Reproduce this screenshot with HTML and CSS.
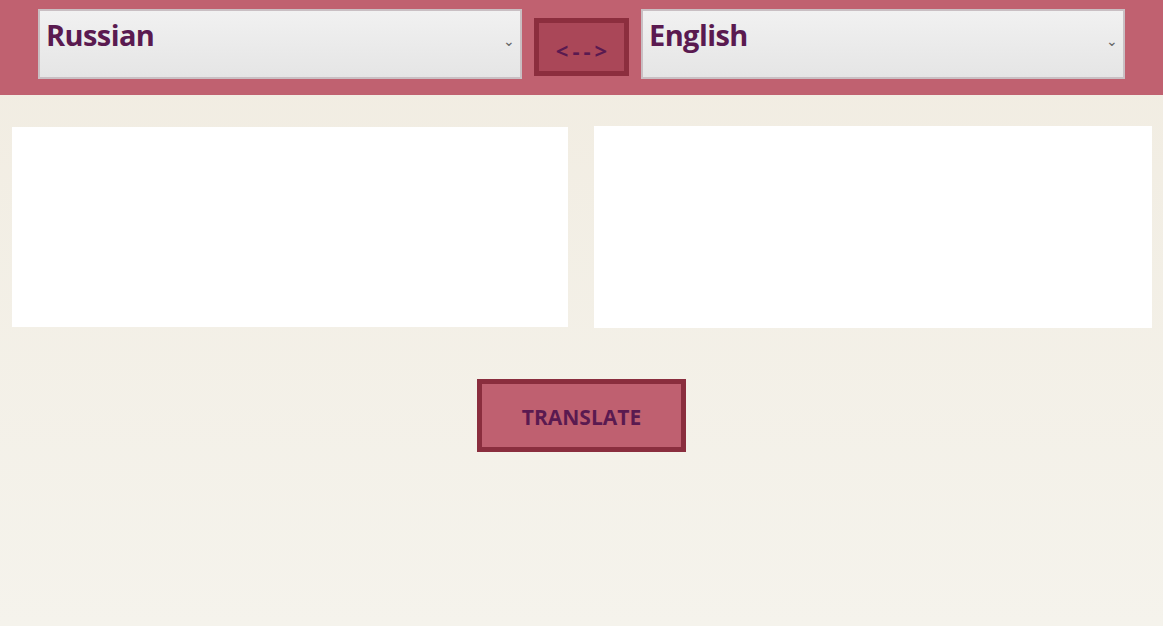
FILE: index.html
```html
<!DOCTYPE html>
<html lang="en">
<head>
<meta charset="utf-8">
<title>Translator</title>
<link rel="stylesheet" href="styles.css">
</head>
<body>
<header class="topbar">
  <div class="lang-select">
    <span class="lang-name">Russian</span>
    <span class="chevron">&#x2304;</span>
  </div>
  <button class="swap" type="button">&lt;--&gt;</button>
  <div class="lang-select">
    <span class="lang-name">English</span>
    <span class="chevron">&#x2304;</span>
  </div>
</header>
<main class="content">
  <div class="panes">
    <textarea class="pane pane-left"></textarea>
    <textarea class="pane pane-right"></textarea>
  </div>
  <div class="actions">
    <button class="translate" type="button">TRANSLATE</button>
  </div>
</main>
</body>
</html>
```
FILE: styles.css
```css
html, body {
  margin: 0;
  padding: 0;
  height: 100%;
}
body {
  font-family: "Open Sans", "Noto Sans", sans-serif;
  background: linear-gradient(to bottom, #f1ece1 0%, #f5f3ec 100%);
}
.topbar {
  height: 95px;
  box-sizing: border-box;
  background: #c06170;
  display: flex;
  justify-content: center;
  align-items: flex-start;
  padding-top: 9px;
  gap: 12px;
}
.lang-select {
  width: 484px;
  height: 70px;
  box-sizing: border-box;
  border: 2px solid #c9bfc3;
  background: linear-gradient(to bottom, #f1f1f1 0%, #e5e5e5 100%);
  display: flex;
  align-items: flex-start;
  justify-content: space-between;
  padding: 4px 5px 0 6px;
}
.lang-name {
  font-size: 29px;
  font-weight: 700;
  color: #5a1a50;
  line-height: 40px;
  letter-spacing: -0.6px;
}
.chevron {
  font-size: 14px;
  color: #666;
  line-height: 14px;
  margin-top: 19px;
}
.swap {
  width: 95px;
  height: 58px;
  margin-top: 9px;
  box-sizing: border-box;
  border: 5px solid #8c2e3e;
  background: #aa4758;
  color: #5a1a50;
  font-family: "Open Sans", "Noto Sans", sans-serif;
  font-weight: 700;
  font-size: 22px;
  letter-spacing: 4px;
  padding: 5px 0 0 4px;
}
.content {
  padding-top: 31px;
}
.panes {
  display: flex;
  justify-content: space-between;
  align-items: flex-start;
  padding: 0 11px 0 12px;
}
.pane {
  display: block;
  border: none;
  background: #fff;
  resize: none;
  padding: 0;
  margin: 0;
  outline: none;
}
.pane-left {
  width: 556px;
  height: 200px;
  margin-top: 1px;
}
.pane-right {
  width: 558px;
  height: 202px;
}
.actions {
  display: flex;
  justify-content: center;
  padding-top: 51px;
}
.translate {
  width: 209px;
  height: 73px;
  box-sizing: border-box;
  border: 5px solid #8a2e3e;
  background: #bf6070;
  color: #5a1a50;
  font-family: "Open Sans", "Noto Sans", sans-serif;
  font-weight: 700;
  font-size: 21px;
  padding: 2px 0 0 0;
}
```
